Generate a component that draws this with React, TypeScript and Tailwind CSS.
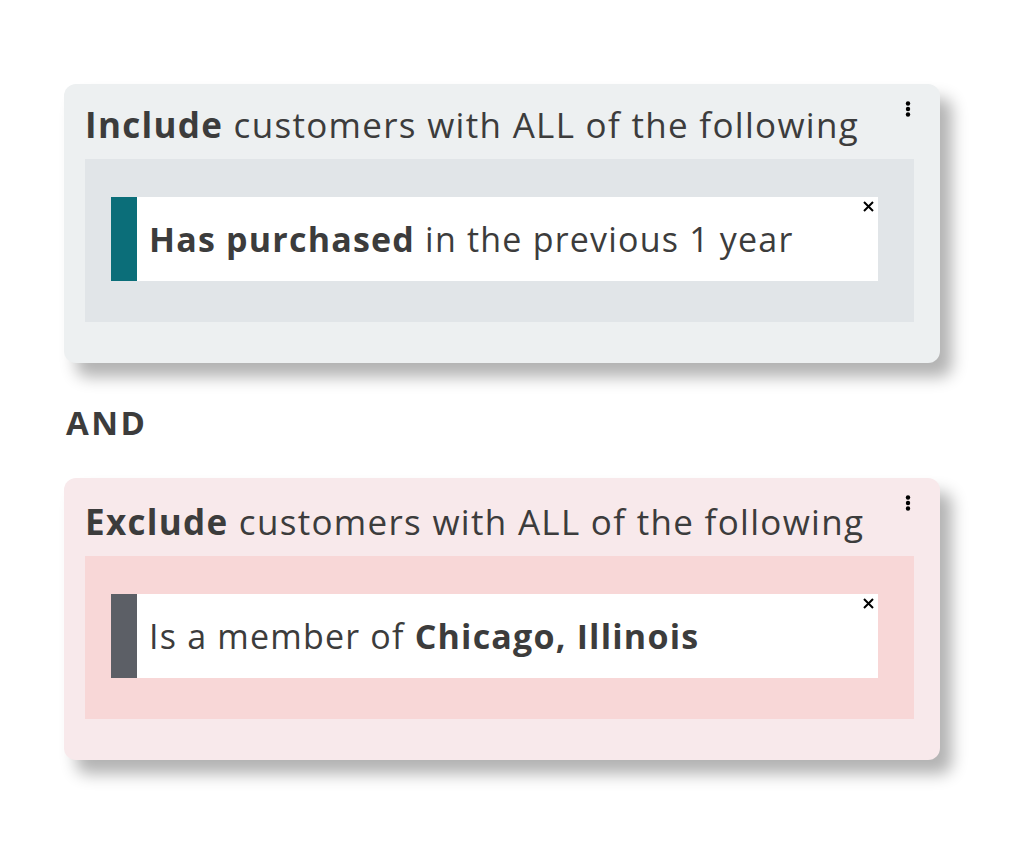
import React from "react";

type Part = { text: string; bold?: boolean };

interface Rule {
  id: string;
  parts: Part[];
  barColor: string;
}

interface Group {
  id: string;
  verb: string;
  cardBg: string;
  boxBg: string;
  titlePad: string;
  rules: Rule[];
}

const groups: Group[] = [
  {
    id: "include",
    verb: "Include",
    cardBg: "bg-[#edf0f1]",
    boxBg: "bg-[#e1e5e8]",
    titlePad: "pt-[18px]",
    rules: [
      {
        id: "r1",
        barColor: "bg-[#0b6e79]",
        parts: [{ text: "Has purchased", bold: true }, { text: " in the previous 1 year" }],
      },
    ],
  },
  {
    id: "exclude",
    verb: "Exclude",
    cardBg: "bg-[#f8e9eb]",
    boxBg: "bg-[#f8d7d7]",
    titlePad: "pt-[21px]",
    rules: [
      {
        id: "r2",
        barColor: "bg-[#5c5f66]",
        parts: [{ text: "Is a member of " }, { text: "Chicago, Illinois", bold: true }],
      },
    ],
  },
];

function DotsIcon() {
  return (
    <svg width="6" height="16" viewBox="0 0 6 16" className="fill-black">
      <circle cx="3" cy="2.5" r="2.2" />
      <circle cx="3" cy="8" r="2.2" />
      <circle cx="3" cy="13.5" r="2.2" />
    </svg>
  );
}

function CloseIcon() {
  return (
    <svg width="11" height="11" viewBox="0 0 11 11" className="stroke-black" strokeWidth="2">
      <path d="M1 1L10 10M10 1L1 10" />
    </svg>
  );
}

function GroupCard({ group }: { group: Group }) {
  return (
    <div
      className={`relative w-[876px] rounded-[12px] ${group.cardBg} pl-[21px] pr-[26px] ${group.titlePad} pb-[41px] shadow-[12px_14px_16px_rgba(0,0,0,0.3)]`}
    >
      <button className="absolute right-[29px] top-[17px]">
        <DotsIcon />
      </button>
      <h3 className="h-[57px] text-[35px] leading-[46px] text-[#3c3c3c] tracking-[1.3px]">
        <span className="font-bold">{group.verb}</span> customers with ALL of the following
      </h3>
      <div className={`${group.boxBg} pl-[26px] pr-[36px] pt-[38px] pb-[41px]`}>
        {group.rules.map((rule) => (
          <div key={rule.id} className="relative flex h-[84px] bg-white">
            <div className={`w-[26px] shrink-0 ${rule.barColor}`} />
            <p className="flex items-center pl-[12px] text-[34px] text-[#3c3c3c] tracking-[1.2px]">
              {rule.parts.map((p, i) => (
                <span key={i} className={p.bold ? "font-bold whitespace-pre" : "whitespace-pre"}>
                  {p.text}
                </span>
              ))}
            </p>
            <button className="absolute right-[4px] top-[4px]">
              <CloseIcon />
            </button>
          </div>
        ))}
      </div>
    </div>
  );
}

export default function App() {
  return (
    <div
      className="min-h-[845px] bg-white pl-[64px] pt-[84px]"
      style={{ fontFamily: '"Open Sans", "Noto Sans", sans-serif' }}
    >
      <GroupCard group={groups[0]} />
      <div className="flex h-[115px] items-center pl-[2px] pt-[4px] text-[33px] font-bold tracking-[2.5px] text-[#3c3c3c]">
        AND
      </div>
      <GroupCard group={groups[1]} />
    </div>
  );
}
